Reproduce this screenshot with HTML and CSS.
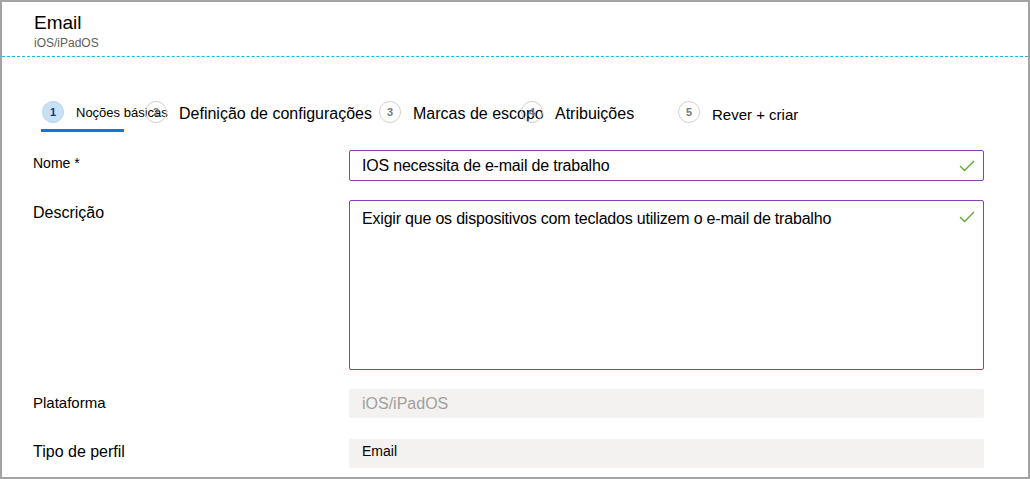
FILE: index.html
```html
<!DOCTYPE html>
<html lang="pt">
  <head>
    <meta charset="UTF-8" />
    <meta name="viewport" content="width=device-width, initial-scale=1.0" />
    <title>Email</title>
    <link rel="stylesheet" href="styles.css">
  </head>
  <body>
    <div class="frame">
      <header class="header">
        <h2 class="title">Email</h2>
        <div class="subtitle">iOS/iPadOS</div>
      </header>

      <div class="steps">
        <div class="step step-active">
          <span class="num">1</span>
          <span class="step-text small">Noções básicas</span>
        </div>
        <div class="step">
          <span class="num">2</span>
          <span class="step-text">Definição de configurações</span>
        </div>
        <div class="step">
          <span class="num">3</span>
          <span class="step-text">Marcas de escopo</span>
        </div>
        <div class="step">
          <span class="num">4</span>
          <span class="step-text">Atribuições</span>
        </div>
        <div class="step">
          <span class="num">5</span>
          <span class="step-text last">Rever + criar</span>
        </div>
      </div>

      <div class="form">
        <label class="label label-sm">Nome *</label>
        <div class="input">
          <span class="value">IOS necessita de e-mail de trabalho</span>
          <svg class="check" width="16" height="12" viewBox="0 0 16 12">
            <polyline points="1,6 5.5,10.5 15,1" fill="none" stroke="#5ea82a" stroke-width="1.3" />
          </svg>
        </div>

        <label class="label">Descrição</label>
        <div class="textarea">
          <span class="value">Exigir que os dispositivos com teclados utilizem o e-mail de trabalho</span>
          <svg class="check" width="16" height="12" viewBox="0 0 16 12">
            <polyline points="1,6 5.5,10.5 15,1" fill="none" stroke="#5ea82a" stroke-width="1.3" />
          </svg>
        </div>

        <label class="label label-md">Plataforma</label>
        <div class="readonly muted">iOS/iPadOS</div>

        <label class="label last-row">Tipo de perfil</label>
        <div class="readonly last-row small-val">Email</div>
      </div>
    </div>
  </body>
</html>
```

FILE: styles.css
```css
* {
  margin: 0;
  padding: 0;
  box-sizing: border-box;
}

body {
  font-family: "Liberation Sans", Arial, sans-serif;
  color: #000;
  background: #fff;
}

.frame {
  width: 1030px;
  height: 479px;
  border: 2px solid #a3a3a3;
  overflow: hidden;
}

.header {
  height: 55px;
  padding: 10px 0 0 32px;
  border-bottom: 1px dashed #1cb6e8;
}

.title {
  font-size: 19px;
  font-weight: normal;
  line-height: 22px;
}

.subtitle {
  font-size: 12px;
  line-height: 16px;
  color: #605e5c;
  margin-top: 1px;
}

.steps {
  display: grid;
  grid-template-columns: 103px 234px 142px 157px auto;
  padding-left: 40px;
  margin-top: 44px;
}

.step {
  display: flex;
  align-items: center;
  gap: 12px;
  height: 22px;
  white-space: nowrap;
  position: relative;
}

.num {
  flex: none;
  width: 22px;
  height: 22px;
  border-radius: 50%;
  border: 1px solid #d2d0ce;
  color: #7a7876;
  font-size: 11px;
  font-weight: bold;
  display: flex;
  align-items: center;
  justify-content: center;
}

.step-text {
  font-size: 16px;
  margin-top: 4px;
}

.step-text.small {
  font-size: 13px;
  margin-top: 0;
}

.step-text.last {
  font-size: 15px;
  margin-top: 5px;
}

.step-active .num {
  background: #c7e0f4;
  border-color: #b4d5f0;
  color: #0b3d78;
}

.step-active::after {
  content: "";
  position: absolute;
  left: -1px;
  bottom: -9px;
  width: 83px;
  height: 3px;
  background: #0f78d4;
}

.form {
  display: grid;
  grid-template-columns: 316px 635px;
  row-gap: 19px;
  padding-left: 31px;
  margin-top: 27px;
}

.label {
  font-size: 16px;
  line-height: 20px;
  padding-top: 3px;
}

.label-sm {
  font-size: 14px;
}

.label-md {
  font-size: 15px;
  padding-top: 4px;
}

.input,
.textarea {
  border: 1px solid #8c3fb5;
  border-radius: 2px;
  display: flex;
  justify-content: space-between;
  padding: 0 8px 0 12px;
  font-size: 16px;
  letter-spacing: -0.2px;
}

.input {
  height: 31px;
  align-items: center;
}

.textarea {
  height: 170px;
  align-items: flex-start;
  padding-top: 8px;
  line-height: 20px;
}

.textarea .check {
  margin-top: 2px;
}

.readonly {
  height: 29px;
  background: #f3f2f1;
  border-radius: 2px;
  padding: 4px 13px 0;
  font-size: 16px;
  line-height: 20px;
}

.muted {
  color: #a19f9d;
  padding-top: 5px;
}

.small-val {
  font-size: 14px;
  padding-top: 2px;
}

.last-row {
  margin-top: 2px;
}
```
